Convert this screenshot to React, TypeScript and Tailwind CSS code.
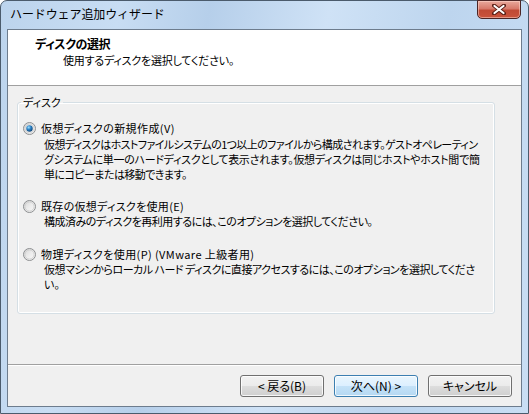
import React from "react";

const jp = "font-['Meiryo_UI','Noto_Sans_CJK_JP',sans-serif] [font-feature-settings:'palt']";

function Radio({ checked }: { checked?: boolean }) {
  return (
    <svg width="13" height="13" viewBox="0 0 13 13" className="shrink-0">
      <defs>
        <linearGradient id="rfill" x1="0" y1="0" x2="1" y2="1">
          <stop offset="0" stopColor="#d4d4d4" />
          <stop offset="0.5" stopColor="#ececec" />
          <stop offset="1" stopColor="#fafafa" />
        </linearGradient>
        <radialGradient id="rdot" cx="0.38" cy="0.33" r="0.75">
          <stop offset="0" stopColor="#9be0ff" />
          <stop offset="0.45" stopColor="#2b80c4" />
          <stop offset="1" stopColor="#0d3c6b" />
        </radialGradient>
      </defs>
      <circle cx="6.5" cy="6.5" r="6" fill="url(#rfill)" stroke="#8c8e90" strokeWidth="1" />
      <circle cx="6.5" cy="6.5" r="4.6" fill="none" stroke="#c9c9c9" strokeWidth="0.8" />
      {checked && <circle cx="6.5" cy="6.5" r="3.2" fill="url(#rdot)" />}
    </svg>
  );
}

function Btn({ children, primary }: { children: React.ReactNode; primary?: boolean }) {
  return (
    <div
      className={
        "w-[84px] h-[22px] rounded-[3px] border flex items-center justify-center text-[12px] leading-none text-black shadow-[inset_0_0_0_1px_rgba(255,255,255,0.8)] " +
        (primary
          ? "border-[#3c7fb1] bg-[linear-gradient(#eaf6fd_0%,#dcefff_50%,#c4e2f8_51%,#b5d8f2_100%)]"
          : "border-[#707070] bg-[linear-gradient(#f2f2f2_0%,#ebebeb_50%,#dddddd_51%,#cfcfcf_100%)]")
      }
    >
      {children}
    </div>
  );
}

export default function App() {
  return (
    <div className={"w-[529px] h-[414px] overflow-hidden " + jp}>
      <div className="w-[529px] h-[414px] rounded-t-[7px] border border-[#4b5b6c] bg-[linear-gradient(100deg,#bcd4ed_0%,#c8ddf3_20%,#b6cfea_35%,#cfe2f6_55%,#bdd5ee_75%,#c9def4_100%)] flex flex-col">
        {/* title bar */}
        <div className="h-[28px] flex items-start">
          <div className="pl-[9px] pt-[5px] text-[12px] leading-[16px] text-black tracking-[-0.1px] [font-feature-settings:normal]">
            ハードウェア追加ウィザード
          </div>
          <div className="ml-auto mr-[7px] w-[44px] h-[19px] -mt-px rounded-b-[5px] border border-[#4b2525] bg-[linear-gradient(#e9a99c_0%,#d77a6b_45%,#c04a35_55%,#c9533c_100%)] shadow-[inset_0_0_0_1px_rgba(255,220,210,0.5)] flex items-center justify-center">
            <svg width="14" height="11" viewBox="0 0 14 11">
              <path d="M2 1.5 L12 9.5 M12 1.5 L2 9.5" stroke="#5a1f16" strokeWidth="4" strokeLinecap="round" />
              <path d="M2.5 2 L11.5 9 M11.5 2 L2.5 9" stroke="#ffffff" strokeWidth="2.2" strokeLinecap="round" />
            </svg>
          </div>
        </div>
        {/* client */}
        <div className="mx-[6px] h-[378px] border border-[#6d7c8d] bg-[#f0f0f0] flex flex-col">
          <div className="h-[56px] bg-white border-b border-[#a0a0a0] flex flex-col">
            <div className="pl-[27px] pt-[6px] text-[12px] leading-[15px] font-bold text-black tracking-[-0.4px]">ディスクの選択</div>
            <div className="pl-[55px] pt-[2px] text-[11px] leading-[15px] text-black tracking-[-0.2px]">使用するディスクを選択してください。</div>
          </div>
          <div className="h-[279px] border-b border-[#a0a0a0] pt-[9px] pl-[9px] pr-[26px]">
            <fieldset className="min-w-0 h-[219px] border border-[#d5dfe5] rounded-[3px] shadow-[inset_0_0_0_1px_#ffffff] pl-[5px] pr-[4px]">
              <legend className="-ml-[2px] px-[2px] text-[11px] leading-[15px] text-black">ディスク</legend>
              <div className="flex flex-col text-[11px] leading-[15px] text-black">
                <div className="mt-[11px] flex items-center gap-[5px] h-[15px]">
                  <Radio checked />
                  <span className="tracking-[0.4px]">仮想ディスクの新規作成(V)</span>
                </div>
                <div className="pl-[21px] mt-[1px] whitespace-nowrap">
                  <div className="tracking-[-0.6px]">仮想ディスクはホストファイルシステムの1つ以上のファイルから構成されます。ゲストオペレーティン</div>
                  <div className="tracking-[-0.3px]">グシステムに単一のハードディスクとして表示されます。仮想ディスクは同じホストやホスト間で簡</div>
                  <div className="tracking-[-0.55px]">単にコピーまたは移動できます。</div>
                </div>
                <div className="mt-[17px] flex items-center gap-[5px] h-[15px]">
                  <Radio />
                  <span className="tracking-[0.3px]">既存の仮想ディスクを使用(E)</span>
                </div>
                <div className="pl-[21px] whitespace-nowrap">
                  <div className="tracking-[-0.5px]">構成済みのディスクを再利用するには、このオプションを選択してください。</div>
                </div>
                <div className="mt-[18px] flex items-center gap-[5px] h-[15px]">
                  <Radio />
                  <span className="tracking-[0.4px]">物理ディスクを使用(P) (VMware 上級者用)</span>
                </div>
                <div className="pl-[21px] whitespace-nowrap">
                  <div className="tracking-[-0.5px]">仮想マシンからローカル ハード ディスクに直接アクセスするには、このオプションを選択してくださ</div>
                  <div>い。</div>
                </div>
              </div>
            </fieldset>
          </div>
          <div className="flex-1 border-t border-white flex justify-end items-start pt-[9px] pr-[9px] gap-[10px]">
            <Btn>&lt; 戻る(B)</Btn>
            <Btn primary>次へ(N) &gt;</Btn>
            <Btn>キャンセル</Btn>
          </div>
        </div>
      </div>
    </div>
  );
}
